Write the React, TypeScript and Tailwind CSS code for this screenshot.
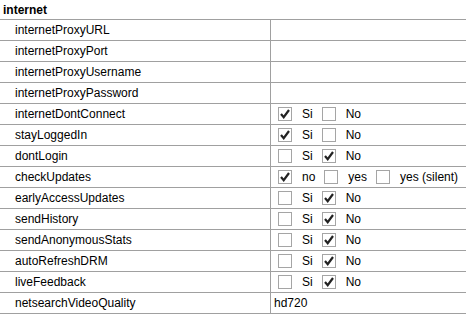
import React from "react";

type Opt = { label: string; checked: boolean };
type Row = { name: string; value?: string; opts?: Opt[] };

const SN = (si: boolean): Opt[] => [
  { label: "Si", checked: si },
  { label: "No", checked: !si },
];

const ROWS: Row[] = [
  { name: "internetProxyURL", value: "" },
  { name: "internetProxyPort", value: "" },
  { name: "internetProxyUsername", value: "" },
  { name: "internetProxyPassword", value: "" },
  { name: "internetDontConnect", opts: SN(true) },
  { name: "stayLoggedIn", opts: SN(true) },
  { name: "dontLogin", opts: SN(false) },
  {
    name: "checkUpdates",
    opts: [
      { label: "no", checked: true },
      { label: "yes", checked: false },
      { label: "yes (silent)", checked: false },
    ],
  },
  { name: "earlyAccessUpdates", opts: SN(false) },
  { name: "sendHistory", opts: SN(false) },
  { name: "sendAnonymousStats", opts: SN(false) },
  { name: "autoRefreshDRM", opts: SN(false) },
  { name: "liveFeedback", opts: SN(false) },
  { name: "netsearchVideoQuality", value: "hd720" },
];

function Box({ checked }: { checked: boolean }) {
  return (
    <span className="w-[14px] h-[14px] border border-[#a5a5a5] bg-white flex items-center justify-center shrink-0">
      {checked && (
        <svg width="12" height="12" viewBox="0 0 12 12">
          <path
            d="M2 6 L4.7 9.2 L10 2"
            fill="none"
            stroke="#222"
            strokeWidth="2.2"
          />
        </svg>
      )}
    </span>
  );
}

export default function App() {
  return (
    <div
      className="w-[466px] h-[315px] bg-white text-black text-[12px] leading-none overflow-hidden"
      style={{ fontFamily: '"Liberation Sans", Arial, sans-serif' }}
    >
      {/* titolo sezione */}
      <div className="h-[20px] border-b border-[#a0a0a0] pl-[3px] flex items-center font-bold">
        internet
      </div>
      {ROWS.map((r) => (
        <div key={r.name} className="h-[21px] border-b border-[#a0a0a0] flex">
          <div className="w-[271px] border-r border-[#a0a0a0] pl-[15px] flex items-center">
            {r.name}
          </div>
          <div className="flex-1 flex items-center pl-[3px]">
            {r.opts ? (
              <div className="flex items-center gap-[9px] pl-[4px]">
                {r.opts.map((o) => (
                  <div key={o.label} className="flex items-center gap-[10px]">
                    <Box checked={o.checked} />
                    <span>{o.label}</span>
                  </div>
                ))}
              </div>
            ) : (
              <span>{r.value}</span>
            )}
          </div>
        </div>
      ))}
    </div>
  );
}
